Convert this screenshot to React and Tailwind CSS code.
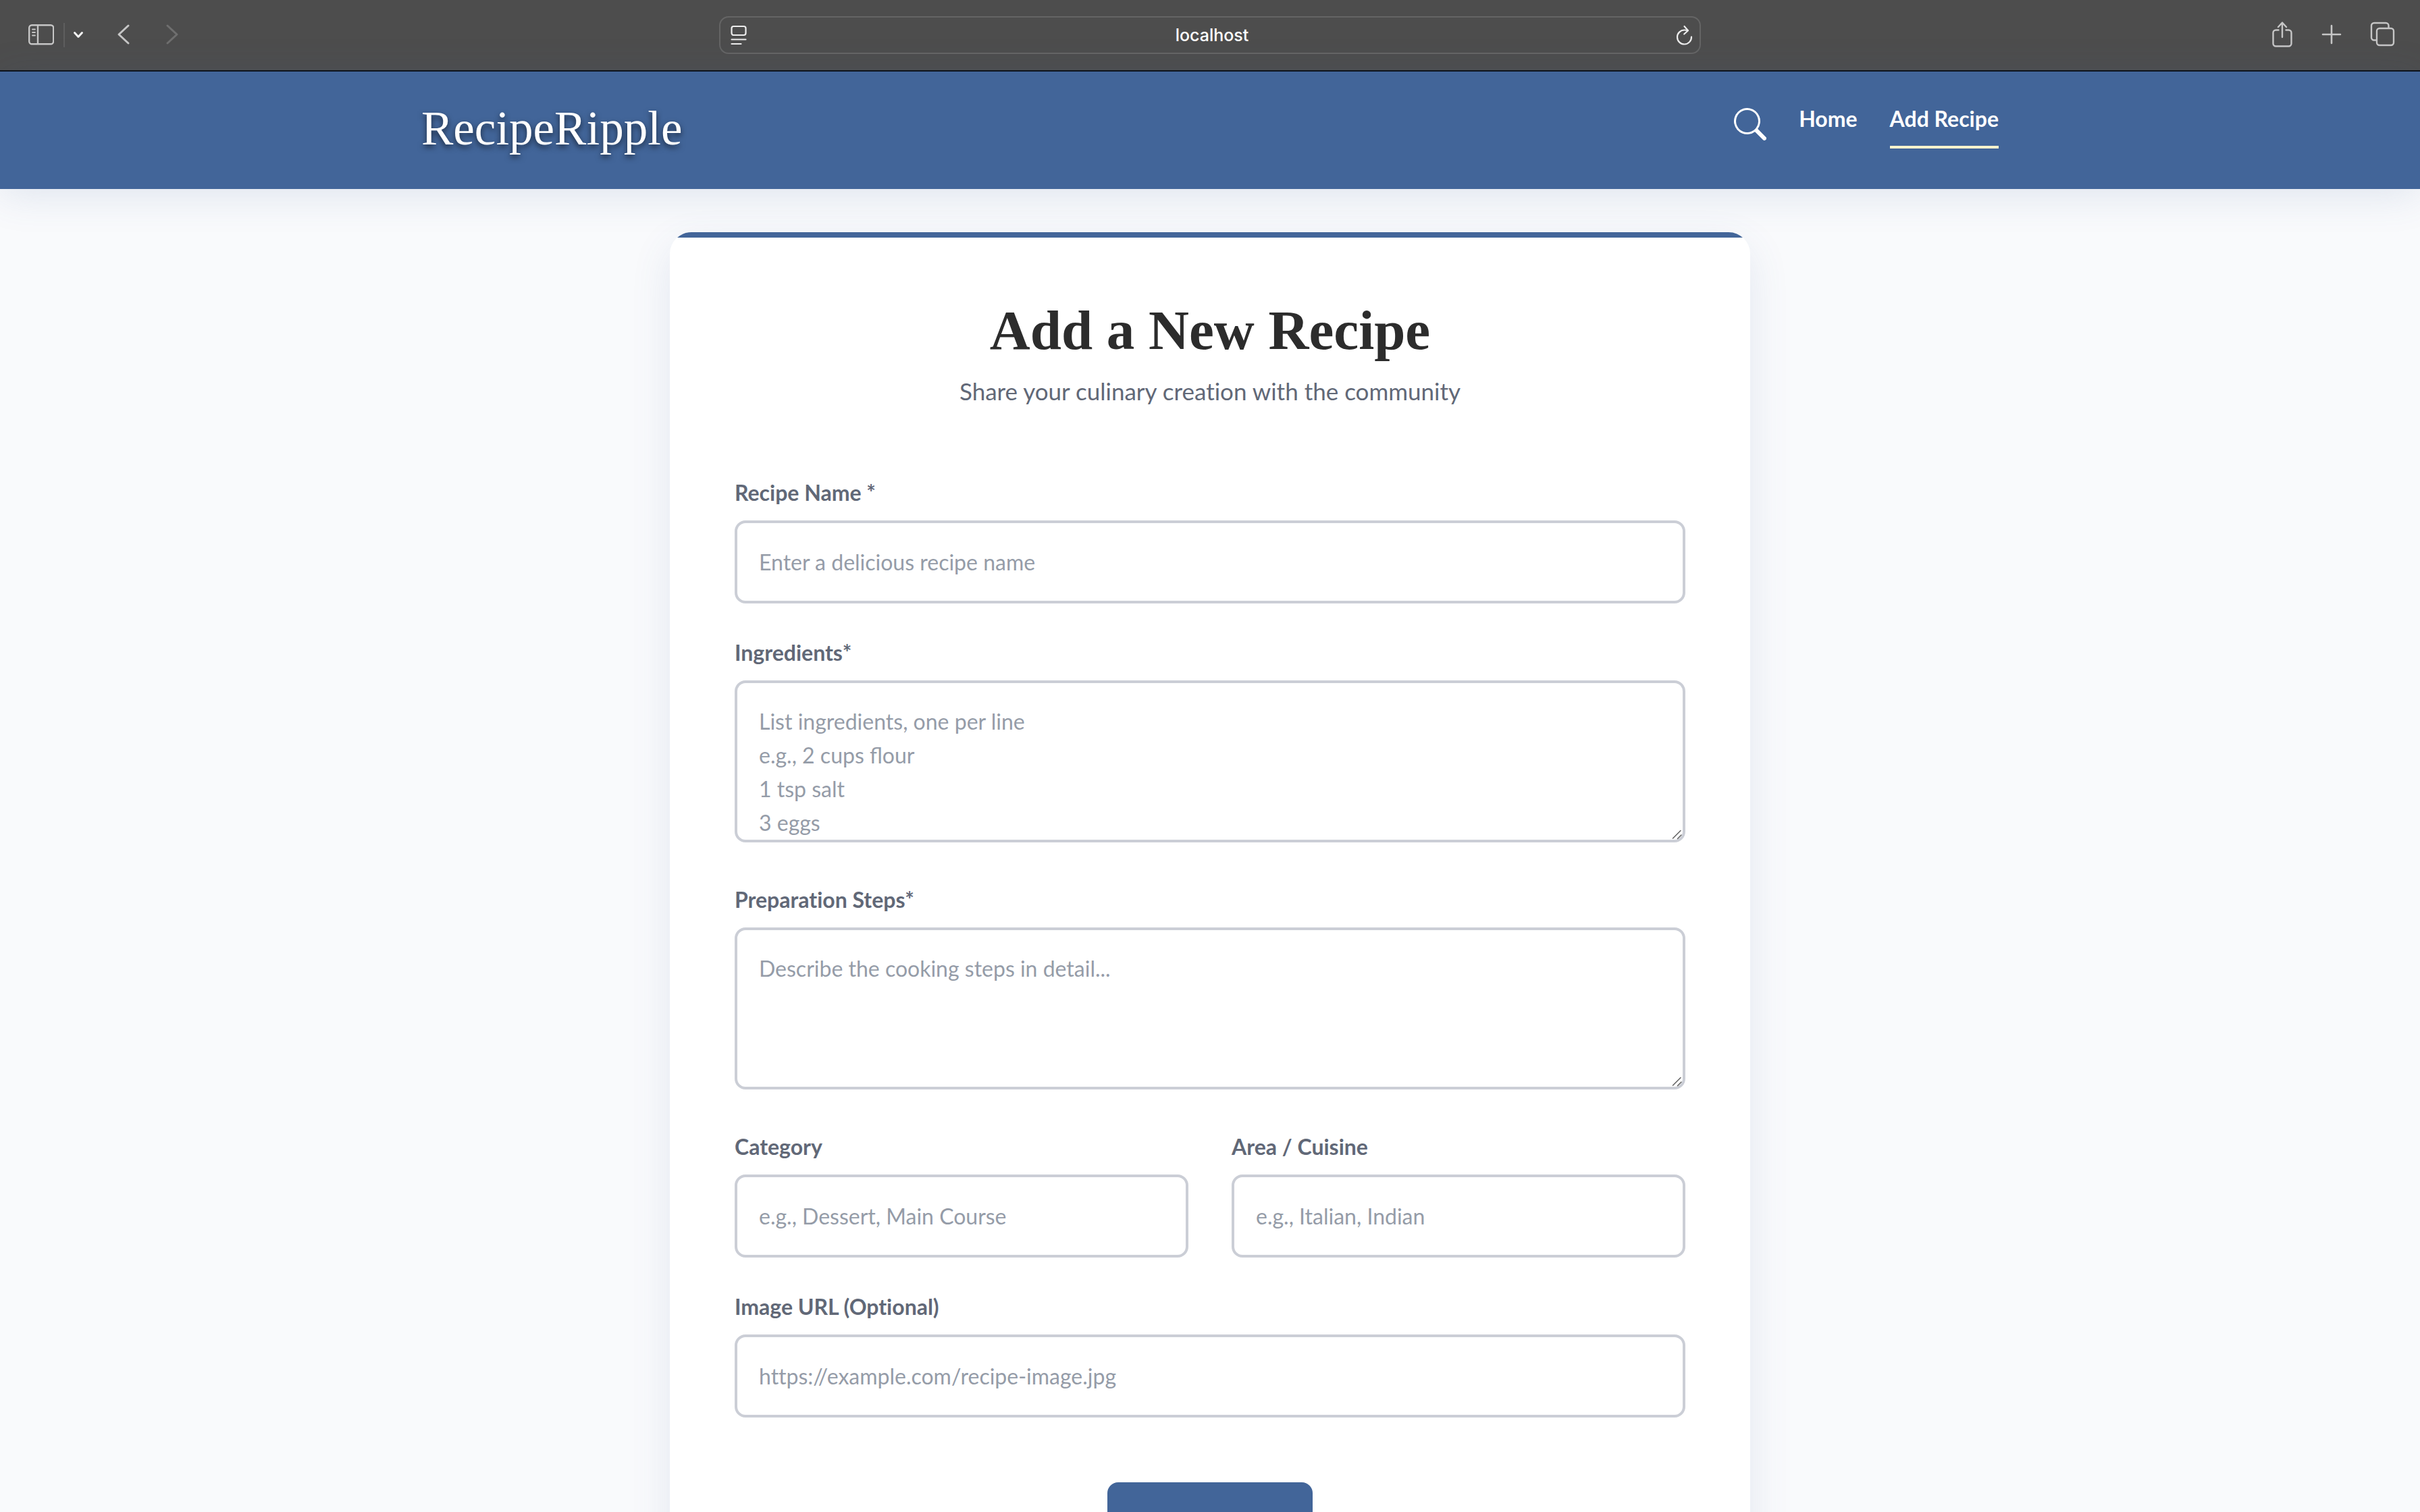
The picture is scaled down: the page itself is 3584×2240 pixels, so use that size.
import React from "react";

function ToolButton({ label, children }) {
  return (
    <button type="button" aria-label={label} className="flex items-center justify-center">
      {children}
    </button>
  );
}

function BrowserBar() {
  return (
    <div className="flex h-[106px] shrink-0 items-center justify-between border-b-2 border-[#0b1017] bg-[#4d4d4d] px-9">
      <div className="flex flex-1 items-center text-[#c6c6c6]">
        <ToolButton label="Sidebar">
          <svg className="h-9 w-11" viewBox="0 0 44 36" fill="none" stroke="currentColor" strokeWidth="2.4">
            <rect x="7.2" y="3.200" width="36" height="28" rx="4" />
            <path d="M20 3v28" />
            <path d="M12 9.500h4M12 14h4M12 18.500h4" strokeWidth="1.8" strokeLinecap="round" />
          </svg>
        </ToolButton>
        <span className="ml-3.5 h-9 w-0.5 bg-[#5e5e5e]" />
        <ToolButton label="Tab groups">
          <svg className="ml-2 h-9 w-8" viewBox="0 0 32 36" fill="none" stroke="#f2f2f2" strokeWidth="3" strokeLinecap="round" strokeLinejoin="round">
            <path d="M6.500 14.500l5.500 6 5.500-6" />
          </svg>
        </ToolButton>
        <ToolButton label="Back">
          <svg className="ml-8 h-9 w-9" viewBox="0 0 36 36" fill="none" stroke="currentColor" strokeWidth="3" strokeLinecap="round" strokeLinejoin="round">
            <path d="M22 4L8 17l14 13" />
          </svg>
        </ToolButton>
        <ToolButton label="Forward">
          <svg className="ml-9 h-9 w-9" viewBox="0 0 36 36" fill="none" stroke="#6f6f6f" strokeWidth="3" strokeLinecap="round" strokeLinejoin="round">
            <path d="M8 4l14 13L8 30" />
          </svg>
        </ToolButton>
      </div>
      <div className="flex h-14 w-full max-w-[1454px] items-center justify-between rounded-[14px] border-2 border-[#656565] pr-1.5 pl-3 text-[#ececec]">
        <ToolButton label="Page settings">
          <svg className="h-8 w-8" viewBox="0 0 32 32" fill="none" stroke="currentColor" strokeWidth="2.2" strokeLinecap="round">
            <rect x="4.500" y="3" width="21" height="13" rx="3" />
            <path d="M4.500 22.500h21M4.500 29h14" />
          </svg>
        </ToolButton>
        <span className="font-['Inter',sans-serif] text-[25px] leading-8 font-medium text-white">localhost</span>
        <ToolButton label="Reload">
          <svg className="h-8 w-8" viewBox="0 0 32 32" fill="none" stroke="currentColor" strokeWidth="2.2" strokeLinecap="round" strokeLinejoin="round">
            <path d="M26 18.500A10.500 10.500 0 1 1 15.500 8.500c2 0 3.500.2 5 .8" />
            <path d="M15.500 3L21 9.300l-5.800 5.200" />
          </svg>
        </ToolButton>
      </div>
      <div className="flex flex-1 items-center justify-end gap-[37px] text-[#c6c6c6]">
        <ToolButton label="Share">
          <svg className="h-10 w-9" viewBox="0 0 36 40" fill="none" stroke="currentColor" strokeWidth="2.400" strokeLinecap="round" strokeLinejoin="round">
            <path d="M12.500 12.500H8.500a4 4 0 0 0-4 4v16a4 4 0 0 0 4 4h19a4 4 0 0 0 4-4V16.500a4 4 0 0 0-4-4h-4" />
            <path d="M18 23V2M12 8l6-6.500L24 8" />
          </svg>
        </ToolButton>
        <ToolButton label="New tab">
          <svg className="h-9 w-9" viewBox="0 0 36 36" fill="none" stroke="currentColor" strokeWidth="2.600" strokeLinecap="round">
            <path d="M18 4v26M5 17h26" />
          </svg>
        </ToolButton>
        <ToolButton label="Tab overview">
          <svg className="h-10 w-10" viewBox="0 0 40 40" fill="none" stroke="currentColor" strokeWidth="2.400" strokeLinejoin="round">
            <rect x="12" y="10" width="25" height="25" rx="4" />
            <path d="M11 27.500H8a4 4 0 0 1-4-4V6a4 4 0 0 1 4-4h17.500a4 4 0 0 1 4 4v3" />
          </svg>
        </ToolButton>
      </div>
    </div>
  );
}

function SiteHeader() {
  return (
    <header className="relative z-10 shrink-0 bg-[#426599] shadow-[0_8px_60px_rgba(66,101,153,0.15)]">
      <div className="mx-auto flex h-[174px] w-full max-w-[2400px] items-start justify-between px-8">
        <a
          href="#home"
          className="mt-11 font-['Liberation_Serif',serif] text-[71px] leading-[80px] text-white [text-shadow:0_4px_8px_rgba(0,0,0,0.6)]"
        >
          RecipeRipple
        </a>
        <nav className="mt-[46px] flex items-start gap-12 text-[32px] leading-[48px] font-bold text-white">
          <button type="button" aria-label="Search" className="mt-2">
            <svg className="h-12 w-12" viewBox="0 0 16 16" fill="currentColor">
              <path d="M11.742 10.344a6.500 6.500 0 1 0-1.397 1.398h-.001c.03.04.062.078.098.115l3.850 3.850a1 1 0 0 0 1.415-1.414l-3.850-3.850a1.007 1.007 0 0 0-.115-.1zM12 6.500a5.500 5.500 0 1 1-11 0 5.500 5.500 0 0 1 11 0z" />
            </svg>
          </button>
          <a href="#home" className="pb-4">Home</a>
          <a href="#add" aria-current="page" className="border-b-4 border-[#fff3cd] pb-4">Add Recipe</a>
        </nav>
      </div>
    </header>
  );
}

const control =
  "block w-full rounded-2xl border-4 border-[#cbced6] bg-white px-8 text-[32px] leading-[50px] text-[#2c2c2c] outline-none placeholder:text-[#959ca8] placeholder:opacity-100 focus:border-[#426599]";

function Field({ id, label, children }) {
  return (
    <div className="flex flex-col gap-4">
      <label htmlFor={id} className="text-[32px] leading-[50px] font-bold text-[#616877]">
        {label}
      </label>
      {children}
    </div>
  );
}

function TextField({ id, label, placeholder, type = "text" }) {
  return (
    <Field id={id} label={label}>
      <input id={id} type={type} placeholder={placeholder} className={`${control} h-[123px]`} />
    </Field>
  );
}

function AreaField({ id, label, placeholder, ligatures = false }) {
  return (
    <div className="mb-3">
      <Field id={id} label={label}>
        <div className="relative">
          <textarea
            id={id}
            placeholder={placeholder}
            className={`${control} h-60 resize-y overflow-hidden py-8 [&::-webkit-resizer]:bg-transparent ${
              ligatures ? "[font-variant-ligatures:normal]" : ""
            }`}
          />
          <svg
            className="pointer-events-none absolute right-1 bottom-1 h-4 w-4"
            viewBox="0 0 16 16"
            fill="none"
            stroke="#666"
            strokeWidth="1.600"
            strokeLinecap="round"
            aria-hidden="true"
          >
            <path d="M1.500 14L13 2.500M8.500 14.500L14 9" />
          </svg>
        </div>
      </Field>
    </div>
  );
}

export default function App() {
  return (
    <div className="flex h-screen flex-col overflow-hidden bg-[#f9fafc] font-['Lato',sans-serif] [font-variant-ligatures:none]">
      <BrowserBar />
      <SiteHeader />
      <main className="min-h-0 flex-1 overflow-hidden px-8 pt-16">
        <section className="mx-auto w-full max-w-[1600px] overflow-hidden rounded-[32px] bg-white shadow-[0_20px_60px_rgba(66,101,153,0.12)]">
          <div className="h-2 bg-[#426599]" />
          <div className="px-24 pt-[83px] pb-24">
            <div className="text-center">
              <h1 className="font-['Liberation_Serif',serif] text-[83px] leading-[108px] font-bold text-[#2c2c2c]">
                Add a New Recipe
              </h1>
              <p className="mt-2 text-[35px] leading-[56px] text-[#616877]">
                Share your culinary creation with the community
              </p>
            </div>
            <form className="mt-[98px] flex flex-col gap-12">
              <TextField id="name" label="Recipe Name *" placeholder="Enter a delicious recipe name" />
              <AreaField
                id="ingredients"
                label="Ingredients*"
                placeholder={"List ingredients, one per line\ne.g., 2 cups flour\n1 tsp salt\n3 eggs"}
                ligatures
              />
              <AreaField id="steps" label="Preparation Steps*" placeholder="Describe the cooking steps in detail..." />
              <div className="grid grid-cols-2 gap-16">
                <TextField id="category" label="Category" placeholder="e.g., Dessert, Main Course" />
                <TextField id="area" label="Area / Cuisine" placeholder="e.g., Italian, Indian" />
              </div>
              <TextField id="image" type="url" label="Image URL (Optional)" placeholder="https://example.com/recipe-image.jpg" />
              <button
                type="submit"
                className="mt-12 self-center rounded-2xl bg-[#426599] px-16 py-8 text-[35px] leading-[56px] font-bold text-white"
              >
                Add Recipe
              </button>
            </form>
          </div>
        </section>
      </main>
    </div>
  );
}
